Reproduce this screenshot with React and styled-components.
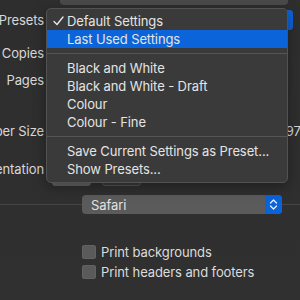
import React from 'react';
import styled, { createGlobalStyle } from 'styled-components';

const Global = createGlobalStyle`
  html, body {
    margin: 0;
    padding: 0;
    background: #2f2f2f;
  }
  body {
    width: 300px;
    height: 300px;
    overflow: hidden;
    font-family: Inter, "Liberation Sans", sans-serif;
    font-size: 13px;
    letter-spacing: -0.1px;
    color: #dedede;
  }
`;

const Page = styled.div`
  position: relative;
  width: 300px;
  height: 300px;
  overflow: hidden;
  background: linear-gradient(180deg, #2e2e2e 0%, #303030 100%);
`;

const TopBar = styled.div`
  margin-left: 60px;
  width: 228px;
  height: 5px;
  background: #4a4a4a;
  border-radius: 0 0 4px 4px;
`;

const Form = styled.div`
  display: flex;
  flex-direction: column;
`;

const Row = styled.div`
  display: flex;
  align-items: center;
  height: ${p => p.h}px;
  margin-top: ${p => p.mt || 0}px;
`;

const Label = styled.div`
  width: 44px;
  flex: none;
  display: flex;
  justify-content: flex-end;
  white-space: nowrap;
  color: #d8d8d8;
  margin-right: 8px;
`;

const Popup = styled.div`
  display: flex;
  align-items: center;
  justify-content: space-between;
  width: ${p => p.w}px;
  height: ${p => p.h || 20}px;
  background: #5b5b5b;
  border-radius: 4px;
  padding-left: 9px;
  box-sizing: border-box;
  color: #e2e2e2;
  overflow: hidden;
  flex: none;
`;

const Stepper = styled.div`
  width: 17px;
  height: 100%;
  background: #0b63d8;
  display: flex;
  align-items: center;
  justify-content: center;
`;

const Field = styled.div`
  width: ${p => p.w}px;
  height: 20px;
  background: #444;
  border-radius: 3px;
`;

const SizeText = styled.span`
  margin-left: 6px;
  white-space: nowrap;
  color: #d8d8d8;
`;

const OrientIcon = styled.div`
  width: 39px;
  height: 27px;
  margin-top: 6px;
  margin-right: 11px;
  background: ${p => (p.on ? '#646464' : '#3a3a3a')};
  border: 1px solid ${p => (p.on ? '#646464' : '#555')};
  border-radius: 3px;
  box-sizing: border-box;
  flex: none;
`;

const RuleRow = styled.div`
  display: flex;
  align-items: center;
  height: 19px;
  margin-top: ${p => p.mt}px;
`;

const Rule = styled.div`
  height: 1px;
  background: #454545;
  flex: ${p => (p.grow ? 1 : 'none')};
  width: ${p => p.w || 0}px;
`;

const CheckRow = styled.label`
  display: flex;
  align-items: center;
  gap: 5px;
  height: 20px;
  margin-left: 82px;
  margin-top: ${p => p.mt || 0}px;
  color: #dcdcdc;
`;

const Box = styled.span`
  width: 14px;
  height: 14px;
  flex: none;
  border-radius: 3px;
  background: #5a5a5a;
  box-shadow: inset 0 0 0 0.5px #6a6a6a;
`;

const Menu = styled.div`
  position: absolute;
  left: 46px;
  top: 8px;
  width: 242px;
  height: 175px;
  box-sizing: border-box;
  padding: 3px 0;
  background: #3a3a3a;
  border: 1px solid #525252;
  border-radius: 5px;
  box-shadow: 0 4px 14px rgba(0, 0, 0, 0.35);
  display: flex;
  flex-direction: column;
`;

const Item = styled.div`
  position: relative;
  height: 18px;
  line-height: 18px;
  padding-left: 20px;
  white-space: nowrap;
  color: #e4e4e4;
  background: ${p => (p.active ? '#0b64d9' : 'transparent')};
`;

const Check = styled.svg`
  position: absolute;
  left: 6px;
  top: 4px;
`;

const Separator = styled.div`
  height: 11px;
  display: flex;
  align-items: center;
  &::after {
    content: '';
    flex: 1;
    height: 1px;
    background: #555;
  }
`;

const Chevrons = () => (
  <svg width="9" height="13" viewBox="0 0 9 13">
    <path d="M1.5 5 L4.5 2 L7.5 5 M1.5 8 L4.5 11 L7.5 8" fill="none" stroke="#e8eefc" strokeWidth="1.3" strokeLinecap="round" strokeLinejoin="round" />
  </svg>
);

export default function App() {
  return (
    <Page>
      <Global />
      <TopBar />
      <Form>
        <Row h={20} mt={5}>
          <Label>Presets</Label>
          <Popup w={241}>
            <span>Default Settings</span>
            <Stepper><Chevrons /></Stepper>
          </Popup>
        </Row>
        <Row h={22} mt={12}>
          <Label>Copies</Label>
          <Field w={50} />
        </Row>
        <Row h={22} mt={5}>
          <Label>Pages</Label>
          <Field w={60} />
        </Row>
        <Row h={22} mt={29}>
          <Label>Paper Size</Label>
          <Popup w={177}>
            <span>A4</span>
            <Stepper><Chevrons /></Stepper>
          </Popup>
          <SizeText>210 by 297 mm</SizeText>
        </Row>
        <Row h={22} mt={16}>
          <Label>Orientation</Label>
          <OrientIcon on />
          <OrientIcon />
        </Row>
      </Form>
      <RuleRow mt={15}>
        <Rule w={82} />
        <Popup w={200} h={19}>
          <span>Safari</span>
          <Stepper><Chevrons /></Stepper>
        </Popup>
        <Rule grow />
      </RuleRow>
      <CheckRow mt={28}>
        <Box />
        Print backgrounds
      </CheckRow>
      <CheckRow>
        <Box />
        Print headers and footers
      </CheckRow>

      <Menu>
        <Item>
          <Check width="11" height="10" viewBox="0 0 11 10">
            <path d="M1 5.5 L4 8.5 L10 1" fill="none" stroke="#e6e6e6" strokeWidth="1.4" strokeLinecap="round" strokeLinejoin="round" />
          </Check>
          Default Settings
        </Item>
        <Item active>Last Used Settings</Item>
        <Separator />
        <Item>Black and White</Item>
        <Item>Black and White - Draft</Item>
        <Item>Colour</Item>
        <Item>Colour - Fine</Item>
        <Separator />
        <Item>Save Current Settings as Preset...</Item>
        <Item>Show Presets...</Item>
      </Menu>
    </Page>
  );
}
